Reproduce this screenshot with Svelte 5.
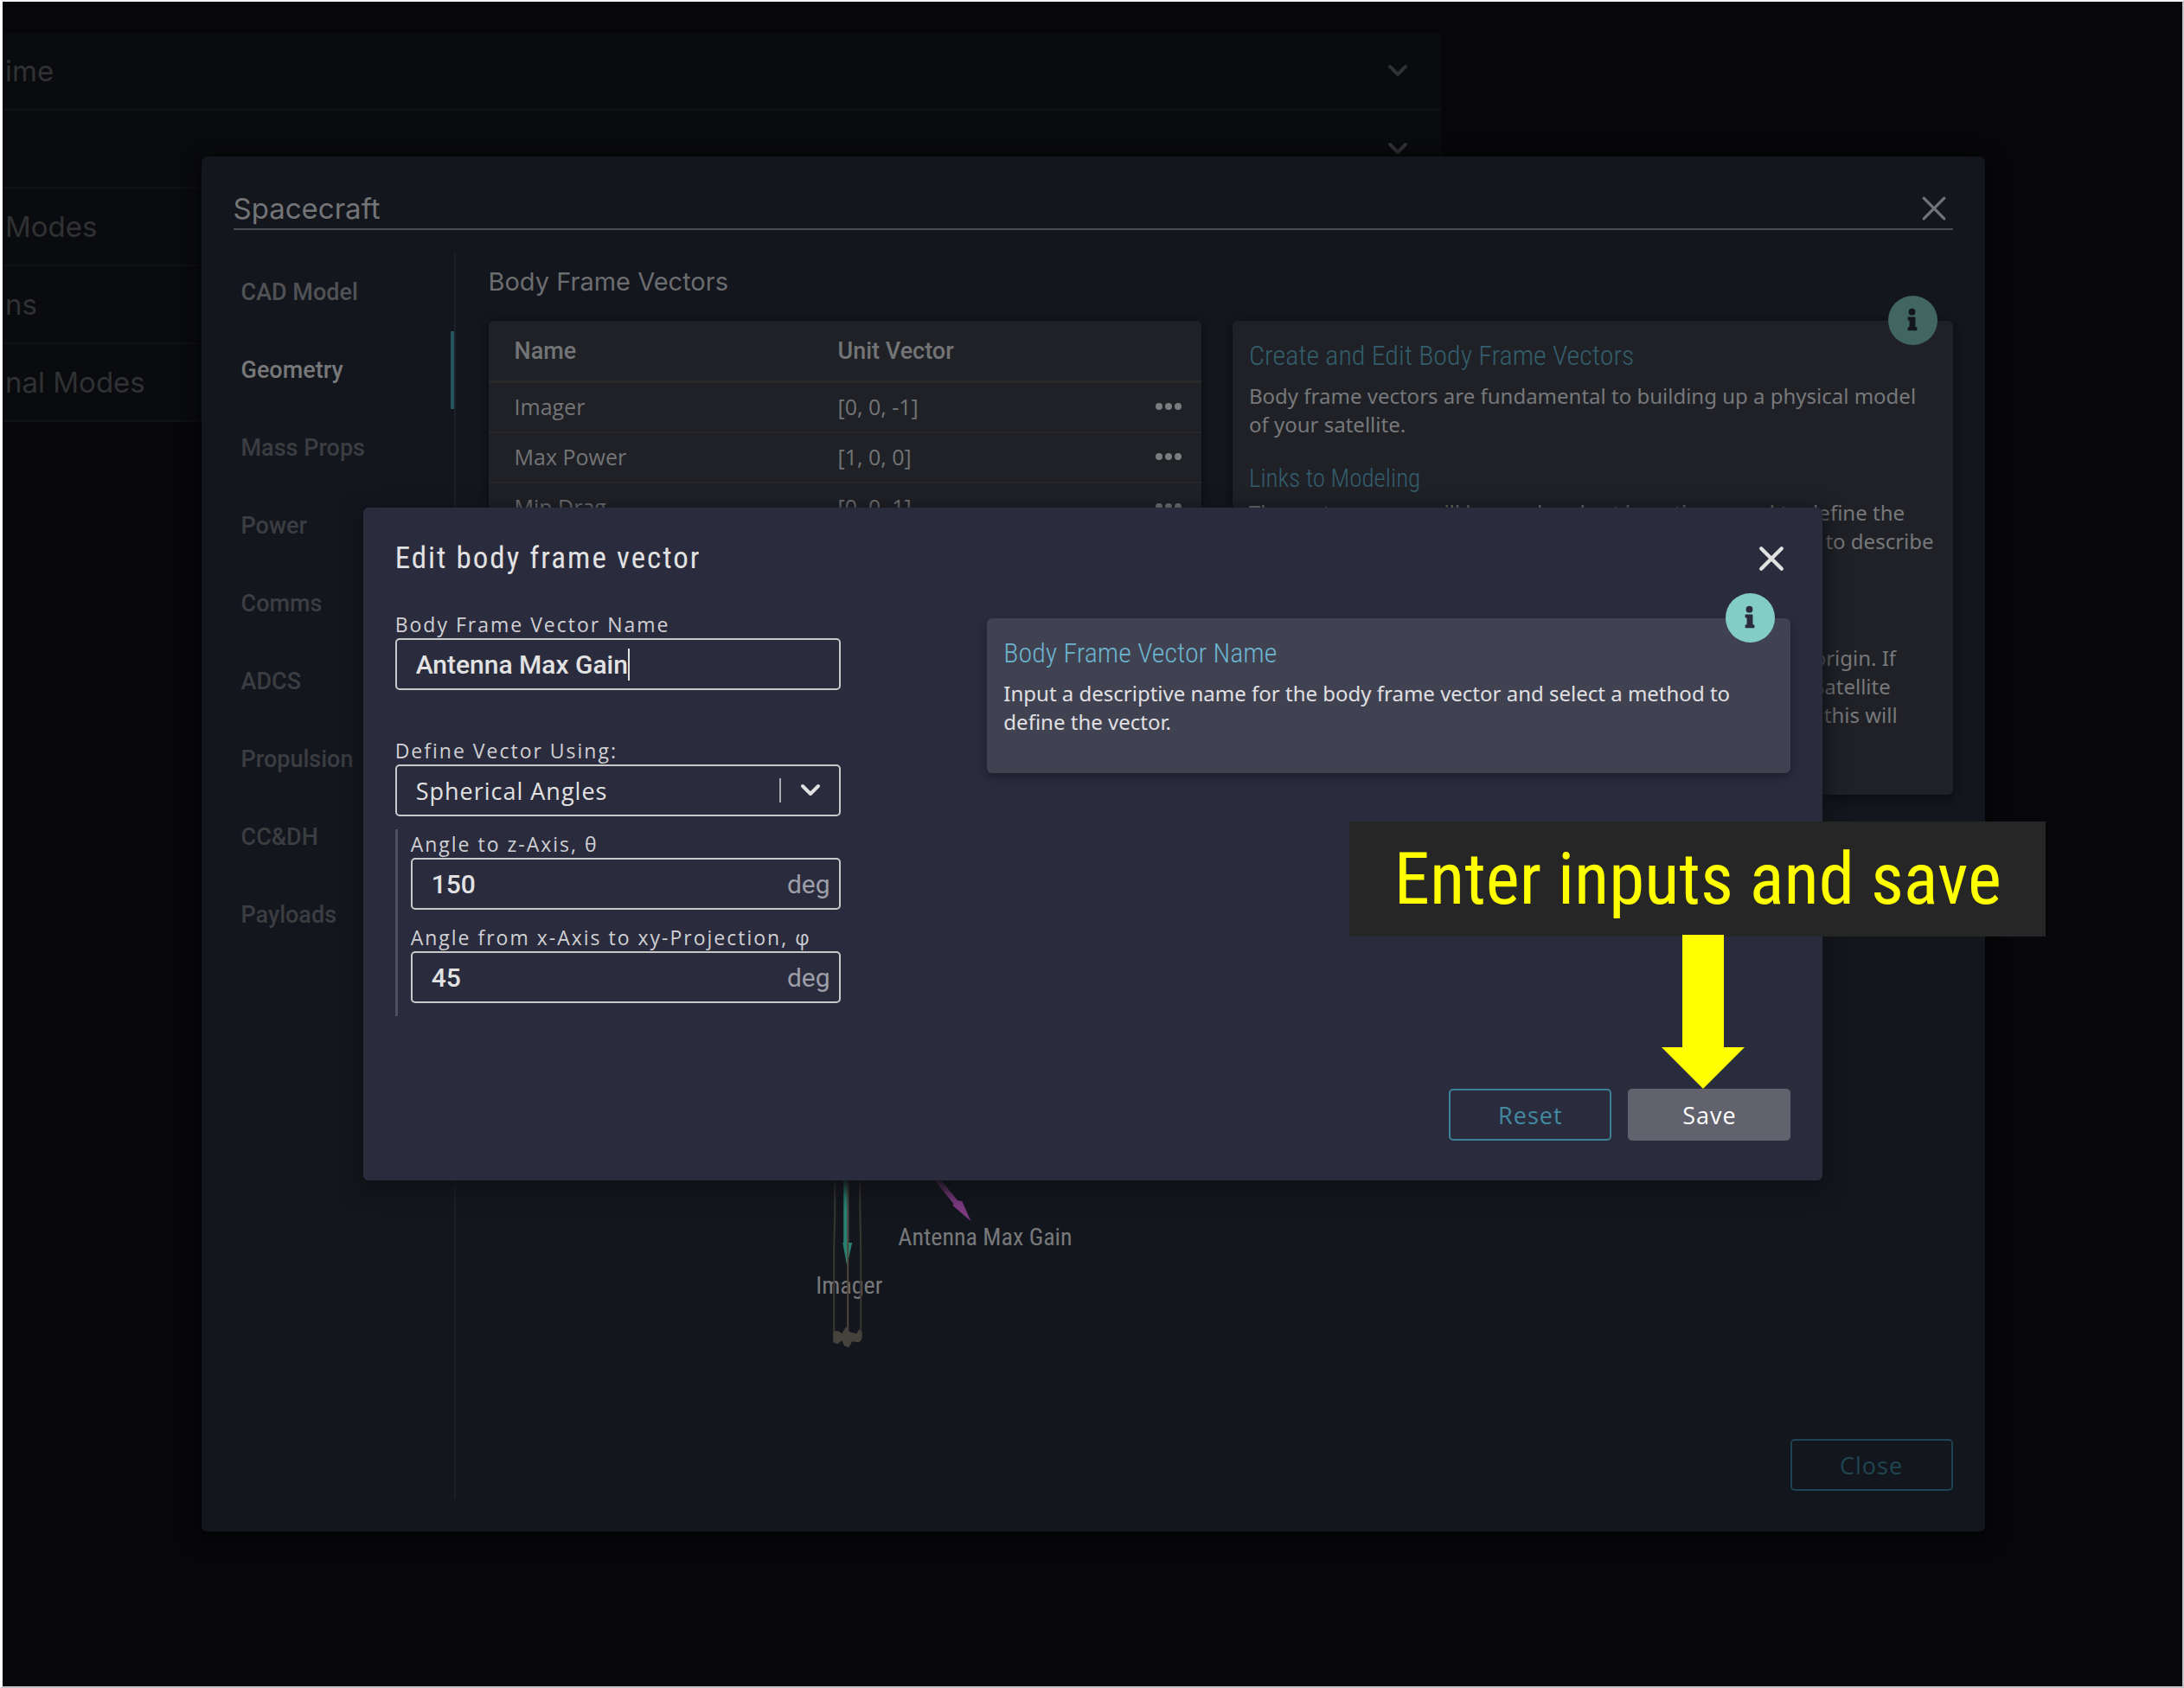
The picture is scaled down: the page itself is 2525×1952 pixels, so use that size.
<script>
  const modes = ['ime', '', 'Modes', 'ns', 'nal Modes'];
  const sections = ['CAD Model', 'Geometry', 'Mass Props', 'Power', 'Comms', 'ADCS', 'Propulsion', 'CC&DH', 'Payloads'];
  const vectors = [
    { name: 'Imager', value: '[0, 0, -1]' },
    { name: 'Max Power', value: '[1, 0, 0]' },
    { name: 'Min Drag', value: '[0, 0, 1]' }
  ];
  let active = $state('Geometry');
  let vectorName = $state('Antenna Max Gain');
  let method = $state('Spherical Angles');
  let theta = $state('150');
  let phi = $state('45');

  function reset() {
    vectorName = 'Antenna Max Gain';
    theta = '150';
    phi = '45';
  }
</script>

{#snippet cross()}
  <svg class="cross" viewBox="0 0 28 28" aria-hidden="true"><path d="M3 3 L25 25 M25 3 L3 25" /></svg>
{/snippet}

{#snippet chevron()}
  <svg class="chevron" viewBox="0 0 24 16" aria-hidden="true"><path d="M3 3 L12 12 L21 3" /></svg>
{/snippet}

{#snippet info()}
  <span class="info">
    <svg viewBox="0 0 58 58" aria-hidden="true">
      <circle cx="28" cy="19" r="4" />
      <path d="M24 25 H31 Q32 25 32 26 V37 H33 Q34 37 34 38 V40 Q34 41 33 41 H24 Q23 41 23 40 V38 Q23 37 24 37 H25 V29 H24 Q23 29 23 28 V26 Q23 25 24 25 Z" />
    </svg>
  </span>
{/snippet}

<div class="page">
  <ul class="accordion">
    {#each modes as mode}
      <li><button><span>{mode}</span>{@render chevron()}</button></li>
    {/each}
  </ul>

  <div class="overlay">
    <section class="modal" aria-label="Spacecraft">
      <header class="modal-head">
        <h1>Spacecraft</h1>
        <button class="icon-button" aria-label="Close spacecraft">{@render cross()}</button>
      </header>

      <div class="modal-body">
        <nav>
          {#each sections as section, i}
            <button class:first={i === 0} class:active={active === section} onclick={() => (active = section)}>{section}</button>
          {/each}
        </nav>

        <div class="content">
          <h2>Body Frame Vectors</h2>
          <div class="columns">
            <div class="left">
              <table>
                <thead>
                  <tr><th>Name</th><th>Unit Vector</th><th class="menu"></th></tr>
                </thead>
                <tbody>
                  {#each vectors as vector}
                    <tr>
                      <td>{vector.name}</td>
                      <td>{vector.value}</td>
                      <td class="menu">
                        <button aria-label="Options for {vector.name}">
                          <svg viewBox="0 0 32 10" aria-hidden="true">
                            <circle cx="5" cy="5" r="4" /><circle cx="16" cy="5" r="4" /><circle cx="27" cy="5" r="4" />
                          </svg>
                        </button>
                      </td>
                    </tr>
                  {/each}
                </tbody>
              </table>
              <svg class="viewer" viewBox="0 0 824 300" role="img" aria-label="Body frame vectors in 3D">
                <g class="label">
                  <text x="473" y="139">Antenna Max Gain</text>
                  <text x="378" y="195">Imager</text>
                </g>
                <path class="edge" d="M400 30 V105 L399 140 V243 M429 30 V90 L430 150 V243" />
                <path class="teal-line" d="M413 30 V138" />
                <path class="teal" d="M409 136 H420 L414 163 Z" />
                <path class="core" d="M415 30 V240" />
                <path class="purple-line" d="M492 30 L541 91" />
                <path class="purple" d="M536 93 L541 87 L547 88 L557 111 Z" />
                <path class="foot" d="M398 239 Q404 236 408 241 L413 233 L417 239 L425 241 L428 236 L431 239 Q433 248 428 251 L420 250 L416 257 L411 255 L408 249 L403 253 L398 251 Z" />
              </svg>
            </div>

            <aside class="card">
              {@render info()}
              <h3>Create and Edit Body Frame Vectors</h3>
              <p>Body frame vectors are fundamental to building up a physical model<br />of your satellite.</p>
              <h4>Links to Modeling</h4>
              <p>
                The vector names will be used and set in options used to define the<br />
                direction of components. They are also used in other areas to describe<br />
                pointing.
              </p>
              <h4>Body Frame</h4>
              <p>
                All the vectors are defined with respect to the body frame origin. If<br />
                you have added a body, the vectors are drawn on it in the Satellite<br />
                view. Vectors you create will be visible in the view, and also this will<br />
                update.
              </p>
            </aside>
          </div>
        </div>
      </div>

      <footer class="modal-foot"><button class="button outline">Close</button></footer>
    </section>
  </div>

  <div class="overlay">
    <section class="dialog" role="dialog" aria-label="Edit body frame vector">
      <header class="dialog-head">
        <h2>Edit body frame vector</h2>
        <button class="icon-button" aria-label="Close dialog">{@render cross()}</button>
      </header>

      <div class="dialog-body">
        <form>
          <label for="name">Body Frame Vector Name</label>
          <div class="field spaced">
            <input id="name" class="hug" bind:value={vectorName} />
            <span class="caret"></span>
          </div>

          <label for="method">Define Vector Using:</label>
          <div class="field picker">
            <select id="method" bind:value={method}>
              <option>Spherical Angles</option>
              <option>Cartesian</option>
            </select>
            <span class="rule"></span>
            {@render chevron()}
          </div>

          <div class="group">
            <label for="theta">Angle to z-Axis, θ</label>
            <div class="field">
              <input id="theta" bind:value={theta} />
              <span class="unit">deg</span>
            </div>
            <label for="phi">Angle from x-Axis to xy-Projection, φ</label>
            <div class="field">
              <input id="phi" bind:value={phi} />
              <span class="unit">deg</span>
            </div>
          </div>
        </form>

        <aside class="card bright">
          {@render info()}
          <h3>Body Frame Vector Name</h3>
          <p>Input a descriptive name for the body frame vector and select a method to<br />define the vector.</p>
        </aside>
      </div>

      <footer class="dialog-foot">
        <button class="button outline" onclick={reset}>Reset</button>
        <button class="button solid">Save</button>
      </footer>

      <div class="callout">
        <p>Enter inputs and save</p>
        <svg viewBox="0 0 96 178" aria-hidden="true"><path d="M24 0 H72 V130 H96 L48 178 L0 130 H24 Z" /></svg>
      </div>
    </section>
  </div>
</div>

<style>
  :global(body) {
    background: #07070b;
  }
  .page {
    position: relative;
    box-sizing: border-box;
    min-height: 100vh;
    padding-top: 36px;
    border: 2px solid #c4c4c6;
    border-top-color: #f0f4f2;
    border-left: 3px solid #fff;
    background: #07070b;
    overflow: hidden;
    font-family: 'Open Sans', 'Noto Sans', sans-serif;
  }
  h1, h2, h3, h4, p, ul {
    margin: 0;
    padding: 0;
    font-weight: 400;
  }
  button, input, select {
    margin: 0;
    padding: 0;
    border: 0;
    background: none;
    color: inherit;
    font: inherit;
    outline: none;
  }
  button {
    cursor: pointer;
  }
  svg {
    display: block;
  }

  .accordion {
    width: 66%;
    list-style: none;
    background: #0a0b0e;
    border-radius: 0 6px 6px 0;
    overflow: hidden;
  }
  .accordion li {
    box-sizing: border-box;
    height: 90px;
    border-bottom: 2px solid #101114;
  }
  .accordion button {
    display: flex;
    align-items: center;
    justify-content: space-between;
    width: 100%;
    height: 100%;
    padding: 0 38px 0 3px;
    color: #303133;
    font: 33px Inter, sans-serif;
  }
  .chevron {
    width: 24px;
    height: 16px;
    fill: none;
    stroke: currentColor;
    stroke-width: 4;
    stroke-linecap: round;
    stroke-linejoin: round;
  }

  .overlay {
    position: absolute;
    inset: 0;
    display: flex;
    align-items: center;
    justify-content: center;
    padding-left: 1px;
  }
  .modal {
    box-sizing: border-box;
    display: flex;
    flex-direction: column;
    width: calc(100% - 457px);
    height: calc(100% - 358px);
    padding: 37px;
    border-radius: 6px;
    background: #13161d;
    box-shadow: 0 6px 20px 4px #040505;
  }
  .modal-head {
    display: flex;
    align-items: center;
    justify-content: space-between;
    height: 46px;
    padding-right: 7px;
    border-bottom: 2px solid #4b4c50;
    color: #737477;
  }
  h1 {
    font: 33px/46px Inter, sans-serif;
  }
  .cross {
    width: 30px;
    height: 30px;
    fill: none;
    stroke: currentColor;
    stroke-width: 3;
    stroke-linecap: round;
  }
  .modal-body {
    display: flex;
    flex: 1;
    min-height: 0;
    margin-top: 27px;
  }
  nav {
    box-sizing: border-box;
    flex: none;
    width: 257px;
    height: 1440px;
    border-right: 2px solid #1e2128;
  }
  nav button {
    display: block;
    width: 255px;
    height: 90px;
    padding-left: 9px;
    border-right: 4px solid transparent;
    color: #3b3d41;
    font: 500 27px Roboto, sans-serif;
    text-align: left;
  }
  nav .first {
    color: #505255;
  }
  nav .active {
    border-right-color: #235560;
    color: #77787a;
  }
  .content {
    flex: 1;
    min-width: 0;
    padding-left: 38px;
  }
  .content h2 {
    height: 78px;
    color: #6c6d70;
    font: 29px/66px Inter, sans-serif;
  }
  .columns {
    display: grid;
    grid-template-columns: minmax(0, 824fr) minmax(0, 832fr);
    gap: 36px;
    align-items: start;
  }
  table {
    width: 100%;
    border-collapse: separate;
    border-spacing: 0;
    border-radius: 6px;
    background: #1f2127;
    box-shadow: 0 3px 10px #0b0d11;
    table-layout: fixed;
    color: #737476;
    font-size: 25px;
    line-height: 36px;
  }
  th, td {
    height: 54px;
    padding: 0 0 2px 30px;
    border-bottom: 2px solid #27272a;
    text-align: left;
  }
  th {
    height: 69px;
    padding-bottom: 0;
    border-bottom: 3px solid #292929;
    font: 500 27px Roboto, sans-serif;
  }
  th:nth-child(2), td:nth-child(2) {
    padding-left: 0;
  }
  th:first-child {
    width: 374px;
  }
  .menu {
    width: 54px;
    padding-left: 0;
  }
  .menu button {
    display: block;
  }
  .menu svg {
    width: 32px;
    height: 10px;
    fill: #7b7c7e;
  }
  .viewer {
    width: 100%;
    margin-top: 684px;
  }
  .label {
    fill: #77787a;
    font: 28px 'Roboto Condensed', Roboto, sans-serif;
  }
  .edge, .core, .teal-line, .purple-line {
    fill: none;
    stroke: #3a3733;
    stroke-width: 2;
  }
  .core {
    stroke: #4e473c;
  }
  .teal-line {
    stroke: #288071;
    stroke-width: 6;
  }
  .teal {
    fill: #288071;
  }
  .purple-line {
    stroke: #7d3b81;
    stroke-width: 6;
  }
  .purple {
    fill: #7d3b81;
  }
  .foot {
    fill: #45423c;
  }

  .card {
    position: relative;
    padding: 16px 19px 43px;
    border-radius: 6px;
    background: #1f2127;
    box-shadow: 0 4px 10px #0b0d11;
    color: #77787a;
  }
  .card p {
    font: 24px/33px 'Noto Sans', 'Open Sans', sans-serif;
    white-space: nowrap;
  }
  .card h3 {
    margin-bottom: 6px;
    color: #335e6c;
    font: 300 32px/48px 'Roboto Condensed', Roboto, sans-serif;
  }
  .card h4 {
    margin: 25px 0 2px;
    color: #335e6c;
    font: 300 29px/42px 'Roboto Condensed', Roboto, sans-serif;
  }
  .card.bright {
    background: #404252;
    box-shadow: 0 4px 10px #1d1e2b;
    color: #e0e0e2;
  }
  .bright h3 {
    color: #6cb4cf;
  }
  .info {
    position: absolute;
    top: -29px;
    right: 18px;
    width: 57px;
    height: 57px;
    border-radius: 50%;
    background: #416560;
    fill: #13161d;
  }
  .bright .info {
    background: #83cdc5;
    fill: #2a2c3d;
  }

  .dialog {
    position: relative;
    box-sizing: border-box;
    width: 67%;
    padding: 37px;
    border-radius: 6px;
    background: #2a2c3d;
    box-shadow: 0 8px 22px 4px #101115;
    color: #e2e2e3;
  }
  .dialog-head {
    display: flex;
    align-items: center;
    justify-content: space-between;
    height: 44px;
    padding-right: 7px;
  }
  .dialog-head h2 {
    font: 35px/44px 'Roboto Condensed', Roboto, sans-serif;
    letter-spacing: 2px;
  }
  .dialog-head .cross {
    stroke-width: 4;
  }
  .dialog-body {
    display: flex;
    align-items: flex-start;
    justify-content: space-between;
    margin-top: 39px;
  }
  .bright {
    box-sizing: border-box;
    width: 929px;
    margin-top: 8px;
  }
  form {
    width: 515px;
  }
  label {
    display: block;
    color: #d0d0d4;
    font-size: 23px;
    line-height: 31px;
    letter-spacing: 2px;
    white-space: nowrap;
  }
  .field {
    box-sizing: border-box;
    display: flex;
    align-items: center;
    height: 60px;
    padding: 0 10px 0 22px;
    border: 2px solid #c9c9cc;
    border-radius: 5px;
  }
  .spaced {
    margin-bottom: 55px;
  }
  .field input {
    flex: 1;
    min-width: 0;
    height: 48px;
    font: 500 30px Roboto, sans-serif;
  }
  .field .hug {
    flex: none;
    field-sizing: content;
  }
  .caret {
    width: 2px;
    height: 37px;
    background: #e2e2e3;
  }
  .picker {
    padding-right: 21px;
  }
  select {
    flex: 1;
    height: 48px;
    appearance: none;
    font-size: 27px;
    letter-spacing: 1px;
  }
  option {
    background: #2a2c3d;
  }
  .rule {
    width: 2px;
    height: 28px;
    margin-right: 22px;
    background: #a9aab0;
  }
  .unit {
    color: #9d9ea7;
    font: 30px Roboto, sans-serif;
  }
  .group {
    display: flex;
    flex-direction: column;
    margin-top: 15px;
    padding: 2px 0 15px 15px;
    border-left: 3px solid #4e5060;
  }
  .group .field + label {
    margin-top: 17px;
  }
  .dialog-foot {
    display: flex;
    justify-content: flex-end;
    gap: 19px;
    margin-top: 84px;
    padding-bottom: 9px;
  }
  .modal-foot {
    display: flex;
    justify-content: flex-end;
    padding-bottom: 10px;
  }
  .button {
    box-sizing: border-box;
    width: 188px;
    height: 60px;
    border-radius: 5px;
    font-size: 27px;
    letter-spacing: 1px;
  }
  .outline {
    border: 2px solid #3b8297;
    color: #4389a0;
  }
  .modal-foot .outline {
    border-color: #1f4350;
    color: #204552;
  }
  .solid {
    background: #61626d;
    color: #fff;
    font-weight: 500;
  }

  .callout {
    position: absolute;
    right: -258px;
    bottom: 106px;
    display: flex;
    flex-direction: column;
    align-items: center;
    width: 805px;
  }
  .callout p {
    width: 100%;
    height: 133px;
    background: #262626;
    color: #ff0;
    font: 83px/133px 'Roboto Condensed', Roboto, sans-serif;
    text-align: center;
    white-space: nowrap;
  }
  .callout svg {
    width: 96px;
    height: 178px;
    margin: -2px 0 0 12px;
    fill: #ff0;
  }
</style>
